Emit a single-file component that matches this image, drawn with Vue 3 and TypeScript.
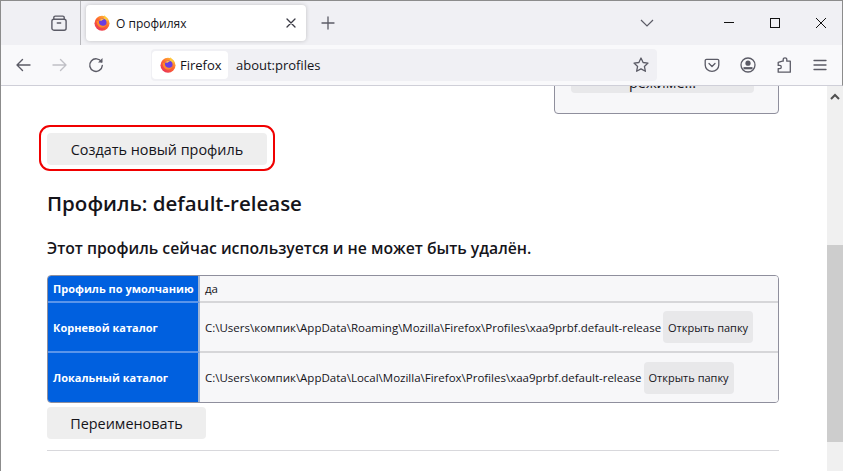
<script setup lang="ts">
interface Row { label: string; value: string; action?: string }
const rows: Row[] = [
  { label: 'Профиль по умолчанию', value: 'да' },
  { label: 'Корневой каталог', value: 'C:\\Users\\компик\\AppData\\Roaming\\Mozilla\\Firefox\\Profiles\\xaa9prbf.default-release', action: 'Открыть папку' },
  { label: 'Локальный каталог', value: 'C:\\Users\\компик\\AppData\\Local\\Mozilla\\Firefox\\Profiles\\xaa9prbf.default-release', action: 'Открыть папку' },
]
</script>

<template>
  <div class="window">
    <header class="titlebar">
      <div class="sidebar-slot">
        <svg width="16" height="16" viewBox="0 0 16 16" fill="none" stroke="#5b5b66" stroke-width="1.4" stroke-linecap="round">
          <rect x="0.9" y="4.200" width="14.200" height="11" rx="2" />
          <path d="M2.800 4V2.600A1.500 1.500 0 0 1 4.300 1.100h7.400a1.500 1.500 0 0 1 1.500 1.500V4" />
          <path d="M6.300 8h3.400" />
        </svg>
      </div>
      <div class="tab">
        <svg class="fx" width="16" height="16" viewBox="0 0 16 16">
          <defs>
            <linearGradient id="fa" x1="0.9" y1="0.05" x2="0.2" y2="1">
              <stop offset="0" stop-color="#ffc93a" />
              <stop offset="0.45" stop-color="#ff6a2b" />
              <stop offset="1" stop-color="#e8305c" />
            </linearGradient>
          </defs>
          <circle cx="8" cy="8.300" r="7.500" fill="url(#fa)" />
          <path d="M10.500.1c.4 1.800 2.900 3 3.900 5.700l-4.700-1.300z" fill="#ffc93a" />
          <circle cx="8.700" cy="7.600" r="3.800" fill="#6a3de0" />
          <path d="M2.600 6c0 4.200 3.200 7.300 6.400 6.400 2.100-.6 3.200-2.100 3.400-3.500-.9 1.300-2.200 2.100-3.900 1.800C6 10.300 4.400 8.500 4.900 6z" fill="#ff8a2a" />
          <path d="M5 5.500c1-1.300 3-2 5.200-1-1.300 0-2.300.7-2.500 1.300z" fill="#ffbd4f" />
        </svg>
        <span class="tab-title">О профилях</span>
        <svg class="tab-close" width="16" height="16" viewBox="0 0 16 16" stroke="#3a3a44" stroke-width="1.3" stroke-linecap="round">
          <path d="M4 4l8 8M12 4l-8 8" />
        </svg>
      </div>
      <svg class="plus" width="16" height="16" viewBox="0 0 16 16" stroke="#5b5b66" stroke-width="1.3" stroke-linecap="round">
        <path d="M8 2v12M2 8h12" />
      </svg>
      <div class="grow"></div>
      <svg class="chev" width="14" height="14" viewBox="0 0 14 14" fill="none" stroke="#5b5b66" stroke-width="1.2">
        <path d="M1 4l6 6 6-6" />
      </svg>
      <div class="winctl">
        <svg width="12" height="12" viewBox="0 0 12 12" stroke="#111" stroke-width="1"><path d="M1 5.500h10" /></svg>
        <svg width="12" height="12" viewBox="0 0 12 12" stroke="#111" stroke-width="1" fill="none"><rect x="1.500" y="1.500" width="9" height="9" /></svg>
        <svg width="12" height="12" viewBox="0 0 12 12" stroke="#111" stroke-width="1"><path d="M1 1l10 10M11 1L1 11" /></svg>
      </div>
    </header>

    <nav class="toolbar">
      <svg class="nav" width="16" height="16" viewBox="0 0 16 16" fill="none" stroke="#5b5b66" stroke-width="1.400" stroke-linecap="round" stroke-linejoin="round">
        <path d="M14 8H1M6.500 2.500L1 8l5.500 5.500" />
      </svg>
      <svg class="nav" width="16" height="16" viewBox="0 0 16 16" fill="none" stroke="#c0c0c6" stroke-width="1.400" stroke-linecap="round" stroke-linejoin="round">
        <path d="M1 8h13M8.500 2.500L14 8l-5.500 5.500" />
      </svg>
      <svg class="nav" width="16" height="16" viewBox="0 0 16 16" fill="none" stroke="#5b5b66" stroke-width="1.400" stroke-linecap="round">
        <path d="M13.500 5A6.300 6.300 0 1 0 14.300 8.500" />
        <path d="M14.500 1v4.500H10z" fill="#5b5b66" stroke="none" />
      </svg>
      <div class="urlbar">
        <div class="chip">
          <svg width="16" height="16" viewBox="0 0 16 16">
            <circle cx="8" cy="8.300" r="7.500" fill="url(#fa)" />
            <path d="M10.500.1c.4 1.800 2.900 3 3.900 5.700l-4.700-1.300z" fill="#ffc93a" />
            <circle cx="8.700" cy="7.600" r="3.800" fill="#6a3de0" />
            <path d="M2.600 6c0 4.200 3.200 7.300 6.400 6.400 2.100-.6 3.200-2.100 3.400-3.500-.9 1.300-2.200 2.100-3.900 1.800C6 10.300 4.400 8.500 4.900 6z" fill="#ff8a2a" />
            <path d="M5 5.500c1-1.300 3-2 5.200-1-1.300 0-2.300.7-2.500 1.300z" fill="#ffbd4f" />
          </svg>
          <span>Firefox</span>
        </div>
        <span class="url">about:profiles</span>
        <svg class="star" width="16" height="16" viewBox="0 0 16 16" fill="none" stroke="#5b5b66" stroke-width="1.300" stroke-linejoin="round">
          <path d="M8 1l2.100 4.500 4.900.6-3.600 3.300 1 4.900L8 11.900l-4.400 2.400 1-4.900L1 6.100l4.900-.6z" />
        </svg>
      </div>
      <div class="tools">
        <svg width="16" height="16" viewBox="0 0 16 16" fill="none" stroke="#5b5b66" stroke-width="1.300" stroke-linecap="round" stroke-linejoin="round">
          <path d="M2.500 2.300h11a1.300 1.300 0 0 1 1.300 1.300V8a6.800 6.300 0 0 1-13.600 0V3.600a1.300 1.300 0 0 1 1.300-1.300z" />
          <path d="M5 6.500L8 9.500l3-3" />
        </svg>
        <svg width="16" height="16" viewBox="0 0 16 16" fill="none" stroke="#5b5b66" stroke-width="1.300">
          <circle cx="8" cy="8" r="7" />
          <circle cx="8" cy="6.200" r="2.600" fill="#5b5b66" stroke="none" />
          <path d="M3.500 11.200h9" stroke-width="2.200" />
        </svg>
        <svg width="16" height="16" viewBox="0 0 16 16" fill="none" stroke="#5b5b66" stroke-width="1.300" stroke-linejoin="round">
          <path d="M9 .8a1.800 1.800 0 0 1 1.800 1.800v1.600h3.500v11H2.200V11.600h1.500a1.600 1.600 0 0 0 0-3.200H2.200V5.400l4.200-1.200h.8V2.600A1.800 1.800 0 0 1 9 .8z" />
        </svg>
        <svg width="16" height="16" viewBox="0 0 16 16" stroke="#5b5b66" stroke-width="1.300" stroke-linecap="round">
          <path d="M2 3.500h12M2 8h12M2 12.500h12" />
        </svg>
      </div>
    </nav>

    <div class="viewport">
      <main class="page">
        <div class="mode-row">
          <div class="mode-box">
            <button class="mode-btn" type="button">Перезапустить в безопасном<br />режиме...</button>
          </div>
        </div>

        <div class="highlight">
          <button class="btn" type="button">Создать новый профиль</button>
        </div>

        <h2>Профиль: default-release</h2>
        <h3>Этот профиль сейчас используется и не может быть удалён.</h3>

        <table class="info">
          <tbody>
            <tr v-for="row in rows" :key="row.label">
              <th>{{ row.label }}</th>
              <td>
                <div class="cell">
                  <span>{{ row.value }}</span>
                  <button v-if="row.action" class="open" type="button">{{ row.action }}</button>
                </div>
              </td>
            </tr>
          </tbody>
        </table>

        <button class="btn rename" type="button">Переименовать</button>
        <hr />
      </main>
      <aside class="scrollbar">
        <svg class="arrow" width="10" height="8" viewBox="0 0 10 8" fill="none" stroke="#505050" stroke-width="2"><path d="M1 6l4-4 4 4" /></svg>
        <div class="thumb"></div>
      </aside>
    </div>
  </div>
</template>

<style>
html, body { margin: 0; background: #fff; overflow: hidden; }
</style>

<style scoped>
.window {
  width: 843px;
  height: 471px;
  box-sizing: border-box;
  border-top: 1px solid #8c8c8c;
  border-left: 1px solid #8c8c8c;
  display: flex;
  flex-direction: column;
  font-family: "Open Sans", "Noto Sans", sans-serif;
  color: #15141a;
  overflow: hidden;
}
.titlebar {
  height: 44px;
  flex: none;
  background: #f0f0f4;
  border-right: 1px solid #8c8c8c;
  display: flex;
  align-items: center;
}
.sidebar-slot {
  width: 80px;
  height: 44px;
  box-sizing: border-box;
  flex: none;
  border-right: 1px solid #b8b8bc;
  padding-left: 50px;
  display: flex;
  align-items: center;
}
.tab {
  margin-left: 5px;
  width: 220px;
  height: 36px;
  background: #fff;
  border-radius: 4px;
  box-shadow: 0 0 4px rgba(0, 0, 0, 0.2);
  display: flex;
  align-items: center;
  padding: 0 7px 0 8px;
  box-sizing: border-box;
  flex: none;
  font-size: 12px;
}
.tab-title { margin-left: 6px; flex: 1; }
.plus { margin-left: 14px; flex: none; }
.grow { flex: 1; }
.chev { flex: none; margin-right: 69px; }
.winctl {
  display: flex;
  gap: 34px;
  margin-right: 15px;
}
.toolbar {
  height: 40px;
  flex: none;
  background: #f9f9fb;
  border-bottom: 1px solid #cfcfd8;
  border-right: 1px solid #8c8c8c;
  display: flex;
  align-items: center;
  padding-left: 15px;
}
.nav { margin-right: 20px; flex: none; }
.urlbar {
  margin-left: 27px;
  width: 506px;
  height: 32px;
  background: #f0f0f4;
  border-radius: 4px;
  display: flex;
  align-items: center;
  flex: none;
  box-sizing: border-box;
  padding-left: 1px;
  padding-right: 8px;
  font-size: 14px;
}
.chip {
  width: 76px;
  height: 28px;
  background: #fff;
  border-radius: 4px;
  display: flex;
  align-items: center;
  gap: 4px;
  padding-left: 8px;
  box-sizing: border-box;
  font-size: 13px;
  flex: none;
}
.url { margin-left: 8px; flex: 1; font-size: 13px; }
.tools {
  margin-left: 47px;
  display: flex;
  gap: 20px;
}
.viewport {
  flex: 1;
  display: flex;
  min-height: 0;
  overflow: hidden;
}
.page {
  flex: 1;
  min-width: 0;
  padding: 0 48px 0 46px;
  margin-top: -62px;
}
.mode-row { display: flex; justify-content: flex-end; }
.mode-box {
  width: 225px;
  height: 90px;
  box-sizing: border-box;
  background: #f7f7f9;
  border: 1px solid #8f8f9d;
  border-radius: 4px;
  padding: 24px 24px 0 16px;
}
.mode-btn {
  width: 100%;
  height: 44px;
  box-sizing: border-box;
  border: 0;
  border-radius: 4px;
  background: #e8e8ea;
  font: inherit;
  font-size: 14.500px;
  line-height: 20px;
  color: #15141a;
  display: block;
  padding: 4px 0 0;
  white-space: nowrap;
  overflow: hidden;
}
.highlight {
  margin: 11px 0 0 -8px;
  width: 236px;
  height: 46px;
  box-sizing: border-box;
  border: 2px solid #f00000;
  border-radius: 11px;
  padding: 6px;
}
.btn {
  display: block;
  height: 32px;
  width: 220px;
  border: 0;
  border-radius: 4px;
  background: #eeeeee;
  font: inherit;
  font-size: 14.400px;
  color: #15141a;
  padding: 0;
}
h2 {
  margin: 17px 0 0;
  font-size: 20.500px;
  line-height: 30px;
  font-weight: 600;
}
h3 {
  margin: 18px 0 0;
  font-size: 15.750px;
  line-height: 24px;
  font-weight: 600;
}
.info {
  margin-top: 15px;
  width: 732px;
  height: 128px;
  border-collapse: separate;
  border-spacing: 0;
  border: 1px solid #8f8f9d;
  border-radius: 4px;
  background: #f9f9fb;
  font-size: 11.500px;
  table-layout: fixed;
  overflow: hidden;
}
th {
  width: 152px;
  background: #0060df;
  color: #fff;
  text-align: left;
  font-weight: 700;
  padding: 0 0 0 5px;
  font-size: 11px;
  box-sizing: border-box;
  border-right: 2px solid #9fb4d4;
  white-space: nowrap;
}
td { padding: 0 0 0 5px; background: #f7f7f9; }
tr:not(:last-child) th { border-bottom: 2px solid #5a95ea; }
tr:not(:last-child) td { border-bottom: 2px solid #d6d6d9; }
tr:first-child { height: 27px; }
tr:nth-child(2) { height: 50px; }
.cell { display: flex; align-items: center; white-space: nowrap; }
.open {
  margin-left: 2px;
  height: 32px;
  width: 90px;
  border: 0;
  border-radius: 4px;
  background: #e8e8ea;
  font: inherit;
  font-size: 11px;
  color: #15141a;
  padding: 0;
}
.rename {
  width: 159px;
  margin-top: 4px;
}
hr {
  margin: 11px 0 0;
  border: 0;
  border-top: 1px solid #d8d8dc;
}
.scrollbar {
  width: 16px;
  flex: none;
  background: #f0f0f0;
  position: relative;
}
.arrow { position: absolute; left: 3px; top: 7px; }
.thumb {
  position: absolute;
  left: 0;
  right: 0;
  top: 159px;
  height: 197px;
  background: #cdcdcd;
}
</style>
